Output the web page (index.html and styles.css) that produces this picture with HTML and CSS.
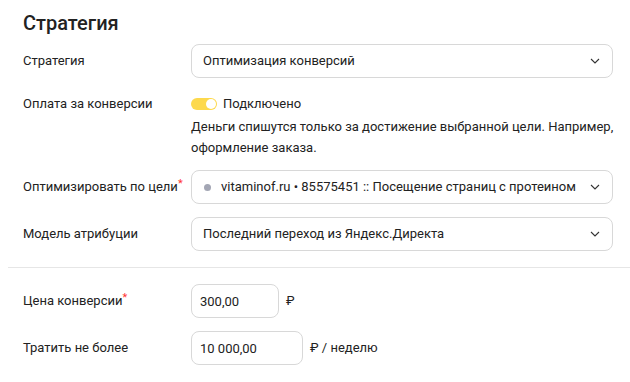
FILE: index.html
```html
<!DOCTYPE html>
<html lang="ru">
<head>
    <meta charset="UTF-8">
    <meta name="viewport" content="width=device-width, initial-scale=1.0">
    <title>Стратегия</title>
    <link rel="stylesheet" href="styles.css">
</head>
<body>
    <div class="panel">
        <h2 class="title">Стратегия</h2>

        <div class="row row-select">
            <div class="label">Стратегия</div>
            <div class="select">
                <span class="select-text">Оптимизация конверсий</span>
                <svg class="chevron" width="10" height="6" viewBox="0 0 10 6"><path d="M1 1l4 4 4-4" fill="none" stroke="#333" stroke-width="1.1"/></svg>
            </div>
        </div>

        <div class="row row-pay">
            <div class="label">Оплата за конверсии</div>
            <div class="pay">
                <div class="switch-line">
                    <span class="switch"><span class="knob"></span></span>
                    <span>Подключено</span>
                </div>
                <p class="hint">Деньги спишутся только за достижение выбранной цели. Например, оформление заказа.</p>
            </div>
        </div>

        <div class="row row-select">
            <div class="label">Оптимизировать по цели<sup class="req">*</sup></div>
            <div class="select">
                <span class="select-text"><span class="dot"></span>vitaminof.ru • 85575451 :: Посещение страниц с протеином</span>
                <svg class="chevron" width="10" height="6" viewBox="0 0 10 6"><path d="M1 1l4 4 4-4" fill="none" stroke="#333" stroke-width="1.1"/></svg>
            </div>
        </div>

        <div class="row row-select row-tight">
            <div class="label">Модель атрибуции</div>
            <div class="select">
                <span class="select-text">Последний переход из Яндекс.Директа</span>
                <svg class="chevron" width="10" height="6" viewBox="0 0 10 6"><path d="M1 1l4 4 4-4" fill="none" stroke="#333" stroke-width="1.1"/></svg>
            </div>
        </div>
    </div>

    <div class="divider"></div>

    <div class="panel">
        <div class="row row-input">
            <div class="label">Цена конверсии<sup class="req">*</sup></div>
            <div class="field">
                <input class="input input-price" type="text" value="300,00">
                <span class="unit">₽</span>
            </div>
        </div>

        <div class="row row-input row-tight">
            <div class="label">Тратить не более</div>
            <div class="field">
                <input class="input input-limit" type="text" value="10 000,00">
                <span class="unit">₽ / неделю</span>
            </div>
        </div>
    </div>
</body>
</html>
```

FILE: styles.css
```css
body {
    margin: 0;
    padding: 0;
    background: #fff;
    color: #222;
    font-family: Roboto, Arial, sans-serif;
    font-size: 13px;
    line-height: 20px;
}
.panel {
    padding: 0 17px 0 23px;
}
.title {
    margin: 0;
    padding-top: 11px;
    font-size: 20px;
    line-height: 24px;
    font-weight: 500;
}
.row {
    display: grid;
    grid-template-columns: 168px 1fr;
    align-items: center;
    margin-top: 18px;
}
.row:first-of-type {
    margin-top: 9px;
}
.row-tight {
    margin-top: 13px;
}
.row-pay {
    align-items: start;
    margin-top: 16px;
}
.row-pay + .row {
    margin-top: 12px;
}
.label {
    white-space: nowrap;
}
.req {
    color: #f33;
    font-size: 11px;
    line-height: 0;
    vertical-align: 4px;
}
.select {
    display: flex;
    align-items: center;
    justify-content: space-between;
    height: 34px;
    box-sizing: border-box;
    padding: 0 12px 0 11px;
    border: 1px solid #d8d8d8;
    border-radius: 8px;
}
.select-text {
    display: flex;
    align-items: center;
    white-space: nowrap;
}
.dot {
    display: inline-block;
    width: 7px;
    height: 7px;
    margin: 0 10px 0 1px;
    border-radius: 50%;
    background: #a3a6b4;
}
.chevron {
    flex: none;
}
.switch-line {
    display: flex;
    align-items: center;
    gap: 6px;
}
.switch {
    position: relative;
    width: 26px;
    height: 12px;
    border-radius: 6px;
    background: #fdd94d;
}
.knob {
    position: absolute;
    top: 1px;
    right: 1px;
    width: 10px;
    height: 10px;
    border-radius: 50%;
    background: #fff;
}
.hint {
    margin: 2px -14px 0 0;
    line-height: 21px;
}
.divider {
    height: 1px;
    margin: 16px 0 0 8px;
    background: #e6e6e6;
}
.panel:last-child .row:first-child {
    margin-top: 16px;
}
.panel:last-child .row-tight {
    margin-top: 13px;
}
.field {
    display: flex;
    align-items: center;
    gap: 7px;
}
.input {
    height: 34px;
    box-sizing: border-box;
    padding: 0 8px;
    border: 1px solid #d8d8d8;
    border-radius: 8px;
    font: inherit;
    color: #222;
    outline: none;
}
.input-price {
    width: 88px;
}
.input-limit {
    width: 112px;
}
.unit {
    white-space: nowrap;
}
```
